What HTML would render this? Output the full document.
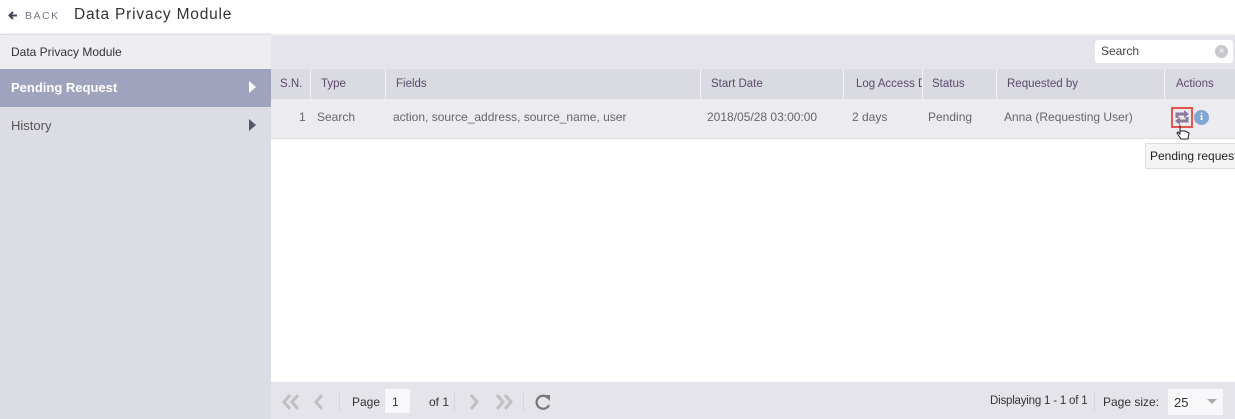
<!DOCTYPE html>
<html><head><style>
*{box-sizing:border-box;margin:0;padding:0}
body{width:1235px;height:419px;overflow:hidden;font-family:"Liberation Sans",sans-serif;background:#fff;position:relative;color:#555}
.a{position:absolute}
.hdr{left:0;top:0;width:1235px;height:33px;background:#fff;box-shadow:0 1px 3px rgba(0,0,0,.08)}
.side{left:0;top:34px;width:271px;height:385px;background:#dcdce4}
.th{top:69px;height:30px;background:#dadae2;font-size:11.5px;color:#5a4a6a;line-height:30px;padding-left:10px;border-right:1px solid #f4f4f8}
.td{top:99px;height:39px;font-size:12px;color:#666;line-height:36px;padding-left:6px}
.arr{font-size:30px;color:#c0c0c4;line-height:30px;font-weight:bold}
</style></head><body>
<div class="a hdr">
 <svg class="a" style="left:8px;top:11px" width="10" height="9"><path d="M9 4.5H2M5 1L1.5 4.5L5 8" stroke="#445" stroke-width="2" fill="none"/></svg>
 <div class="a" style="left:25px;top:10px;font-size:10.5px;letter-spacing:1.5px;color:#778">BACK</div>
 <div class="a" style="left:74px;top:6px;font-size:15.5px;letter-spacing:.8px;color:#333">Data Privacy Module</div>
</div>
<div class="a side"></div>
<div class="a" style="left:0;top:35px;width:271px;height:34px;background:#eeeef2;font-size:12px;color:#333;line-height:34px;padding-left:11px">Data Privacy Module</div>
<div class="a" style="left:0;top:69px;width:271px;height:38px;background:#a0a3bd;font-size:13px;font-weight:bold;color:#fff;line-height:38px;padding-left:11px">Pending Request</div>
<svg class="a" style="left:249px;top:81px" width="8" height="12"><path d="M0 0L7 6L0 12Z" fill="#fff"/></svg>
<div class="a" style="left:11px;top:107px;font-size:13px;color:#555;line-height:38px">History</div>
<svg class="a" style="left:249px;top:119px" width="8" height="12"><path d="M0 0L7 6L0 12Z" fill="#556"/></svg>

<div class="a" style="left:271px;top:35px;width:964px;height:34px;background:#e4e4ea"></div>
<div class="a" style="left:1095px;top:40px;width:138px;height:23px;background:#fff;border-radius:3px;font-size:12px;color:#444;line-height:23px;padding-left:6px">Search</div>
<div class="a" style="left:1215px;top:45px;width:13px;height:13px;border-radius:50%;background:#c8c8cc;color:#fff;font-size:10px;line-height:13px;text-align:center">×</div>

<div class="a th" style="left:271px;width:40px;padding-left:9px">S.N.</div>
<div class="a th" style="left:311px;width:75px">Type</div>
<div class="a th" style="left:386px;width:315px">Fields</div>
<div class="a th" style="left:701px;width:143px">Start Date</div>
<div class="a th" style="left:844px;width:79px;overflow:hidden;white-space:nowrap;padding-left:12px">Log Access Duration</div>
<div class="a th" style="left:923px;width:74px;padding-left:9px">Status</div>
<div class="a th" style="left:997px;width:168px">Requested by</div>
<div class="a th" style="left:1165px;width:70px;padding-left:11px;border:none">Actions</div>

<div class="a" style="left:271px;top:99px;width:964px;height:40px;background:#ececf0;border-bottom:1px solid #ddd"></div>
<div class="a td" style="left:293px">1</div>
<div class="a td" style="left:311px">Search</div>
<div class="a td" style="left:387px">action, source_address, source_name, user</div>
<div class="a td" style="left:701px">2018/05/28 03:00:00</div>
<div class="a td" style="left:846px">2 days</div>
<div class="a td" style="left:922px">Pending</div>
<div class="a td" style="left:998px">Anna (Requesting User)</div>
<div class="a" style="left:1171px;top:107px;width:22px;height:21px;border:2px solid #e8554e"></div>
<svg class="a" style="left:1174px;top:110px" width="16" height="15"><path d="M3 8V4h8" stroke="#8a7aa0" stroke-width="3" fill="none"/><path d="M10 0l5 4-5 4z" fill="#8a7aa0"/><path d="M13 7v4H5" stroke="#8a7aa0" stroke-width="3" fill="none"/><path d="M6 7l-5 4 5 4z" fill="#8a7aa0"/></svg>
<div class="a" style="left:1194px;top:110px;width:15px;height:15px;border-radius:50%;background:#7ea6d0;color:#fff;font-size:11px;font-weight:bold;line-height:15px;text-align:center;font-family:'Liberation Serif',serif">i</div>
<svg class="a" style="left:1176px;top:124px" width="14" height="17"><path d="M4 1v9l-2-2-1 1 4 6h7l1-6-4-2V7H4z" fill="#fff" stroke="#222" stroke-width="1"/></svg>
<div class="a" style="left:1145px;top:143px;width:100px;height:26px;background:#f4f4f4;border:1px solid #ddd;border-radius:2px;font-size:12px;color:#222;line-height:24px;padding-left:4px;white-space:nowrap">Pending request</div>

<div class="a" style="left:271px;top:382px;width:964px;height:37px;background:#e4e4ea"></div>
<svg class="a" style="left:282px;top:394px" width="18" height="16"><path d="M8 1L2 8l6 7M16 1l-6 7 6 7" stroke="#c0c0c4" stroke-width="3" fill="none"/></svg>
<svg class="a" style="left:314px;top:394px" width="10" height="16"><path d="M8 1L2 8l6 7" stroke="#c0c0c4" stroke-width="3" fill="none"/></svg>
<div class="a" style="left:339px;top:391px;width:1px;height:20px;background:#d4d4da"></div>
<div class="a" style="left:352px;top:395px;font-size:12px;color:#333">Page</div>
<div class="a" style="left:385px;top:389px;width:25px;height:24px;background:#f8f8fa;font-size:12px;color:#333;line-height:26px;padding-left:7px">1</div>
<div class="a" style="left:429px;top:395px;font-size:12px;color:#333">of 1</div>
<div class="a" style="left:454px;top:391px;width:1px;height:20px;background:#d4d4da"></div>
<svg class="a" style="left:469px;top:394px" width="10" height="16"><path d="M2 1l6 7-6 7" stroke="#c0c0c4" stroke-width="3" fill="none"/></svg>
<svg class="a" style="left:495px;top:394px" width="18" height="16"><path d="M2 1l6 7-6 7M10 1l6 7-6 7" stroke="#c0c0c4" stroke-width="3" fill="none"/></svg>
<div class="a" style="left:523px;top:391px;width:1px;height:20px;background:#d4d4da"></div>
<svg class="a" style="left:534px;top:393px" width="18" height="18"><path d="M14 5A6.5 6.5 0 1 0 15 12" stroke="#777" stroke-width="2.2" fill="none"/><path d="M10 2h6v6z" fill="#777"/></svg>
<div class="a" style="left:990px;top:395px;font-size:11.5px;color:#333;letter-spacing:-.2px">Displaying 1 - 1 of 1</div>
<div class="a" style="left:1094px;top:391px;width:1px;height:20px;background:#d4d4da"></div>
<div class="a" style="left:1103px;top:395px;font-size:12px;color:#333">Page size:</div>
<div class="a" style="left:1168px;top:389px;width:55px;height:26px;background:#f8f8fa;font-size:13px;color:#333;line-height:28px;padding-left:6px">25</div>
<svg class="a" style="left:1207px;top:399px" width="10" height="6"><path d="M0 0h10L5 5z" fill="#aaa"/></svg>
</body></html>
